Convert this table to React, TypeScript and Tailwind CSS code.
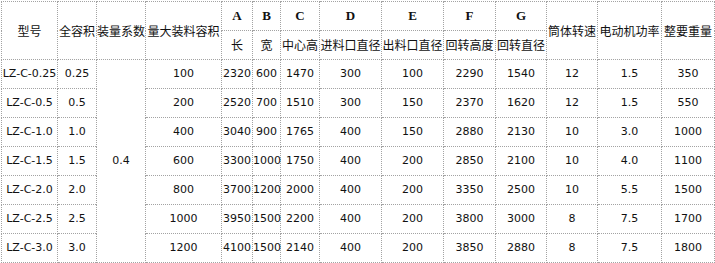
const rows = [
  ["LZ-C-0.25", "0.25", "100", "2320", "600", "1470", "300", "100", "2290", "1540", "12", "1.5", "350"],
  ["LZ-C-0.5", "0.5", "200", "2520", "700", "1510", "300", "150", "2370", "1620", "12", "1.5", "550"],
  ["LZ-C-1.0", "1.0", "400", "3040", "900", "1765", "400", "150", "2880", "2130", "10", "3.0", "1000"],
  ["LZ-C-1.5", "1.5", "600", "3300", "1000", "1750", "400", "200", "2850", "2100", "10", "4.0", "1100"],
  ["LZ-C-2.0", "2.0", "800", "3700", "1200", "2000", "400", "200", "3350", "2500", "10", "5.5", "1500"],
  ["LZ-C-2.5", "2.5", "1000", "3950", "1500", "2200", "400", "200", "3800", "3000", "8", "7.5", "1700"],
  ["LZ-C-3.0", "3.0", "1200", "4100", "1500", "2140", "400", "200", "3850", "2880", "8", "7.5", "1800"],
];

const widths = [56, 39, 49, 76, 31, 28, 39, 62, 62, 52, 51, 51, 64, 53];
const letters = ["A", "B", "C", "D", "E", "F", "G"];
const subs = ["长", "宽", "中心高", "进料口直径", "出料口直径", "回转高度", "回转直径"];

const cell = "border border-dotted border-[#a3a3a3] p-0 text-center whitespace-nowrap";
const cn = "text-[12px] [font-family:'Noto_Sans_CJK_SC',sans-serif] font-normal";

export default function App() {
  return (
    <div className="bg-white w-[715px] h-[263px] pt-px pl-px text-[#111] [font-family:'DejaVu_Sans',sans-serif] text-[11px]">
      <table className="border-collapse table-fixed w-[713px]">
        <colgroup>
          {widths.map((w, i) => (
            <col key={i} style={{ width: w }} />
          ))}
        </colgroup>
        <thead>
          <tr className="h-[29px]">
            <th rowSpan={2} className={`${cell} ${cn}`}>型号</th>
            <th rowSpan={2} className={`${cell} ${cn}`}>全容积</th>
            <th rowSpan={2} className={`${cell} ${cn}`}>装量系数</th>
            <th rowSpan={2} className={`${cell} ${cn}`}>量大装料容积</th>
            {letters.map((l) => (
              <th key={l} className={`${cell} text-[13px] font-bold [font-family:'Liberation_Serif',serif]`}>
                {l}
              </th>
            ))}
            <th rowSpan={2} className={`${cell} ${cn}`}>筒体转速</th>
            <th rowSpan={2} className={`${cell} ${cn}`}>电动机功率</th>
            <th rowSpan={2} className={`${cell} ${cn}`}>整要重量</th>
          </tr>
          <tr className="h-[29px]">
            {subs.map((s, i) => (
              <th
                key={s}
                className={`${cell} ${cn} ${i === 0 ? "border-l-solid border-l-[#b0b0b0]" : ""} ${i === 6 ? "border-r-solid border-r-[#b0b0b0]" : ""}`}
              >
                {s}
              </th>
            ))}
          </tr>
        </thead>
        <tbody>
          {rows.map((r, i) => (
            <tr key={r[0]} className="h-[29px]">
              <td className={cell}>{r[0]}</td>
              <td className={`${cell} ${i > 0 ? "border-r-solid border-r-[#b0b0b0]" : ""}`}>{r[1]}</td>
              {i === 0 && (
                <td rowSpan={7} className={cell}>
                  0.4
                </td>
              )}
              {r.slice(2).map((v, j) => (
                <td
                  key={j}
                  className={`${cell} ${j === 0 && i === 1 ? "border-l-solid border-l-[#b0b0b0]" : ""}`}
                >
                  {v}
                </td>
              ))}
            </tr>
          ))}
        </tbody>
      </table>
    </div>
  );
}
